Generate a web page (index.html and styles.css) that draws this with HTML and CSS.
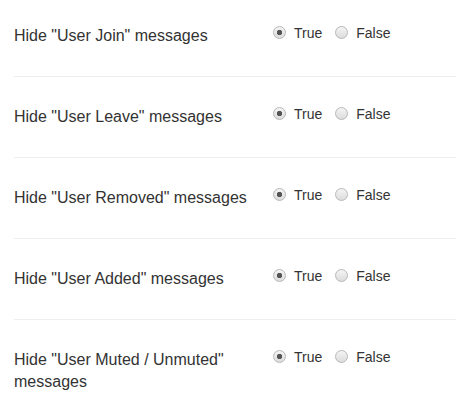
FILE: index.html
```html
<!DOCTYPE html>
<html>
<head>
<meta charset="utf-8">
<link rel="stylesheet" href="styles.css">
</head>
<body>
<div class="settings">
  <div class="row">
    <div class="label">Hide "User Join" messages</div>
    <div class="choices">
      <label class="choice"><input type="radio" name="r1" checked><span>True</span></label>
      <label class="choice"><input type="radio" name="r1"><span>False</span></label>
    </div>
  </div>
  <div class="row">
    <div class="label">Hide "User Leave" messages</div>
    <div class="choices">
      <label class="choice"><input type="radio" name="r2" checked><span>True</span></label>
      <label class="choice"><input type="radio" name="r2"><span>False</span></label>
    </div>
  </div>
  <div class="row">
    <div class="label">Hide "User Removed" messages</div>
    <div class="choices">
      <label class="choice"><input type="radio" name="r3" checked><span>True</span></label>
      <label class="choice"><input type="radio" name="r3"><span>False</span></label>
    </div>
  </div>
  <div class="row">
    <div class="label">Hide "User Added" messages</div>
    <div class="choices">
      <label class="choice"><input type="radio" name="r4" checked><span>True</span></label>
      <label class="choice"><input type="radio" name="r4"><span>False</span></label>
    </div>
  </div>
  <div class="row">
    <div class="label">Hide "User Muted / Unmuted" messages</div>
    <div class="choices">
      <label class="choice"><input type="radio" name="r5" checked><span>True</span></label>
      <label class="choice"><input type="radio" name="r5"><span>False</span></label>
    </div>
  </div>
</div>
</body>
</html>
```
FILE: styles.css
```css
html, body {
  margin: 0;
  padding: 0;
  background: #fff;
}
body {
  font-family: "Liberation Sans", Arial, sans-serif;
  color: #333;
}
.settings {
  padding-left: 14px;
  height: 401px;
  overflow: hidden;
}
.row {
  display: grid;
  grid-template-columns: 259px auto;
  padding: 29px 0;
  border-bottom: 1px solid #eeeeee;
}
.row:first-child {
  padding-top: 25px;
}
.row:last-child {
  border-bottom: none;
}
.label {
  font-size: 16px;
  line-height: 22px;
}
.choices {
  display: flex;
  align-items: flex-start;
  gap: 13px;
}
.choice {
  display: flex;
  align-items: flex-start;
  font-size: 14px;
  line-height: 16px;
}
.choice span {
  margin-left: 8px;
}
.choice input {
  -webkit-appearance: none;
  appearance: none;
  width: 13px;
  height: 13px;
  margin: 1px 0 0 0;
  border: 1px solid #b8b8b8;
  border-radius: 50%;
  box-sizing: border-box;
  background: linear-gradient(#f4f4f4, #dcdcdc);
}
.choice input:checked {
  background: radial-gradient(circle, #555 0, #555 2.4px, transparent 3px), linear-gradient(#f4f4f4, #dcdcdc);
}
```
